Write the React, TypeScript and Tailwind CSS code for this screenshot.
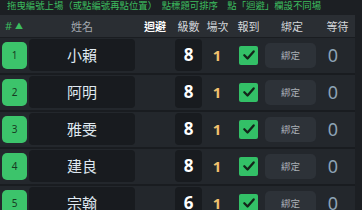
import React from "react";

const rows = [
  { n: 1, name: "小賴", lv: 8 },
  { n: 2, name: "阿明", lv: 8 },
  { n: 3, name: "雅雯", lv: 8 },
  { n: 4, name: "建良", lv: 8 },
  { n: 5, name: "宗翰", lv: 6 },
];

const cjk = { fontFamily: '"Noto Sans CJK TC", "Noto Sans", sans-serif' };
const num = { fontFamily: '"Noto Sans", "Liberation Sans", sans-serif' };

function Check() {
  return (
    <svg width="14" height="14" viewBox="0 0 24 24" fill="none">
      <path d="M4 12.5l5.5 5.5L20 6" stroke="#14241a" strokeWidth="4" strokeLinecap="round" strokeLinejoin="round" />
    </svg>
  );
}

export default function App() {
  return (
    <div className="w-[362px] h-[210px] overflow-hidden bg-[#1c1f23]" style={cjk}>
      <div className="h-[15px] overflow-hidden pl-[7px]">
        <div className="text-[9.4px] leading-[12px] -mt-[1px] text-[#3cbd5f] whitespace-nowrap">
          拖曳編號上場（或點編號再點位置）　點標題可排序　點「迴避」欄設不同場
        </div>
      </div>
      <div className="flex w-[355px] h-[23px] items-center bg-[#2a2e33] text-[11px] text-[#d4d7da] border-b border-[#1a1d21]">
        <div className="w-[29px] pl-[5px] text-[#3cbd5f] flex items-center gap-[3px]">
          <span style={num}>#</span>
          <span className="text-[8px]">▲</span>
        </div>
        <div className="w-[106px] text-center text-[#a3a9af]">姓名</div>
        <div className="w-[40px] text-center text-white font-bold">迴避</div>
        <div className="w-[27px] text-center">級數</div>
        <div className="w-[31px] text-center">場次</div>
        <div className="w-[31px] text-center">報到</div>
        <div className="w-[56px] text-center">綁定</div>
        <div className="w-[35px] text-center">等待</div>
      </div>
      {rows.map((r) => (
        <div key={r.n} className="flex w-[355px] h-[37px] pt-[1px] bg-[#23272c] border-b-2 border-[#191c20]">
          <div className="flex h-[32px] items-center w-full">
            <div className="ml-[2px] w-[25px] h-[27px] rounded-[5px] bg-[#3cc46b] flex items-center justify-center text-[10px] text-[#173a22]" style={num}>
              {r.n}
            </div>
            <div className="ml-[2px] w-[106px] h-[32px] rounded-[4px] bg-[#181b1f] flex items-center justify-center text-[15px] text-[#dfe8f0]">
              {r.name}
            </div>
            <div className="w-[40px]" />
            <div className="w-[27px] h-[32px] rounded-[4px] bg-[#181b1f] flex items-center justify-center text-[17px] font-bold text-white" style={num}>
              {r.lv}
            </div>
            <div className="w-[30px] text-center text-[15px] font-bold text-[#f2c26e]" style={num}>1</div>
            <div className="w-[33px] flex justify-center">
              <div className="w-[19px] h-[19px] rounded-[2px] bg-[#33c067] flex items-center justify-center">
                <Check />
              </div>
            </div>
            <div className="w-[51px] h-[25px] rounded-[5px] bg-[#2d3238] flex items-center justify-center text-[9.5px] text-[#aab0b6]">
              綁定
            </div>
            <div className="w-[34px] text-center text-[18px] text-[#8da2b6]" style={num}>0</div>
          </div>
        </div>
      ))}
    </div>
  );
}
